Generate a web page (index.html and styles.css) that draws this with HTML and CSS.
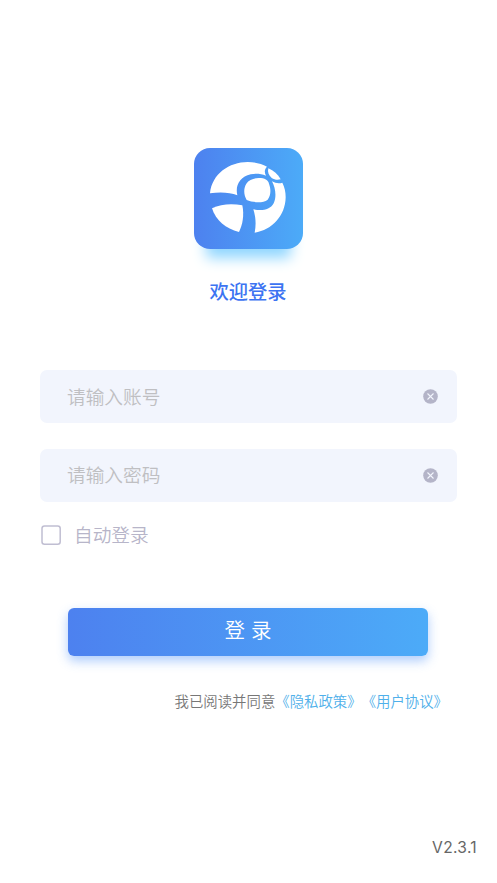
FILE: index.html
```html
<!DOCTYPE html>
<html lang="zh-CN">
<head>
<meta charset="utf-8">
<title>欢迎登录</title>
<link rel="stylesheet" href="styles.css">
</head>
<body>
<main class="page">
  <div class="logo">
    <svg class="logo-mark" viewBox="0 0 258 252" fill="#fff" aria-hidden="true">
      <path d="M15 115C21 56 73 21 128 21C149 21 169 26 186 35C179 42 177 51 183 62C168 56 151 55 137 58C105 65 90 91 97 121C75 112 45 111 15 115Z"/>
      <path d="M124 86C132 74 147 69 161 69C180 69 189 75 192 86C199 105 197 121 188 134C174 145 145 143 125 135C116 119 115 101 124 86Z"/>
      <path d="M190 40C187 51 191 61 200 69C208 74 217 76 227 73C219 58 206 47 190 40Z"/>
      <path d="M201 79C211 85 223 86 232 83C239 97 242 111 242 127C241 182 202 225 149 233C154 207 152 185 145 163C169 168 195 166 206 145C215 126 212 100 201 79Z"/>
      <path d="M21 160C48 147 80 145 112 151C118 181 113 209 102 231C62 221 33 197 21 160Z"/>
    </svg>
  </div>
  <h1 class="title">欢迎登录</h1>
  <form class="form">
    <div class="field">
      <input class="input" type="text" placeholder="请输入账号">
      <svg class="clear" viewBox="0 0 15 15" aria-hidden="true"><circle cx="7.5" cy="7.5" r="7.3"/><path d="M4.5 4.5l6 6M10.5 4.5l-6 6"/></svg>
    </div>
    <div class="field field-password">
      <input class="input" type="text" placeholder="请输入密码">
      <svg class="clear" viewBox="0 0 15 15" aria-hidden="true"><circle cx="7.5" cy="7.5" r="7.3"/><path d="M4.5 4.5l6 6M10.5 4.5l-6 6"/></svg>
    </div>
    <label class="auto"><svg class="box" viewBox="0 0 20 20" aria-hidden="true"><rect x="1" y="1" width="18.2" height="18.2" rx="2.5"/></svg><span class="auto-text">自动登录</span></label>
    <button class="submit" type="button">登 录</button>
  </form>
  <p class="terms">我已阅读并同意<span class="link">《隐私政策》</span><span class="link">《用户协议》</span></p>
  <footer class="version">V2.3.1</footer>
</main>
</body>
</html>
```
FILE: styles.css
```css
* { box-sizing: border-box; }

body {
  margin: 0;
  background: #fff;
  font-family: "Noto Sans CJK SC", sans-serif;
  font-weight: 350;
}

.page {
  display: flex;
  flex-direction: column;
  height: 883px;
  padding: 148px 40px 0;
}

.logo {
  align-self: center;
  flex: none;
  width: 109px;
  height: 101px;
  margin-right: 1px;
  padding: 7px 0 0 11px;
  border-radius: 16px;
  background: linear-gradient(90deg, #4d81ef, #4cabf8);
  box-shadow: 0 21px 14px -12px #8fd6ff;
}

.logo-mark {
  display: block;
  width: 86px;
  height: 84px;
}

.title {
  margin: 28px 1px 0 0;
  color: #3d74f2;
  font-size: 19.3px;
  font-weight: 500;
  line-height: 28px;
  text-align: center;
}

.form {
  display: flex;
  flex-direction: column;
  margin-top: 65px;
}

.field {
  display: flex;
  align-items: center;
  height: 53px;
  padding: 0 19px 0 27px;
  border-radius: 7px;
  background: #f2f5fd;
}

.field-password { margin-top: 26px; }

.input {
  flex: 1;
  min-width: 0;
  height: 30px;
  margin-bottom: 3px;
  padding: 0;
  border: 0;
  outline: 0;
  background: transparent;
  font: inherit;
  font-size: 18.7px;
}

.input::placeholder { color: #bfbfc2; }

.field-password .input { margin-bottom: 5px; }

.clear {
  width: 15px;
  height: 15px;
  fill: #b4b4c8;
}

.clear path {
  stroke: #f2f5fd;
  stroke-width: 1.1;
}

.auto {
  display: flex;
  align-items: center;
  gap: 13px;
  height: 28px;
  margin-top: 19px;
  padding-left: 1px;
  color: #b7b5c9;
  font-size: 18.7px;
}

.auto-text { padding-bottom: 3px; }

.box {
  width: 20px;
  height: 20px;
  fill: none;
  stroke: #c0bed2;
  stroke-width: 1.5;
}

.submit {
  height: 48px;
  margin: 59px 29px 0 28px;
  padding: 0 0 7px;
  border: 0;
  border-radius: 6px;
  background: linear-gradient(90deg, #4d81ef, #4cabf8);
  box-shadow: 0 5px 11px rgba(77, 145, 248, .45);
  color: #fff;
  font: inherit;
  font-size: 20.5px;
  word-spacing: 1.5px;
}

.terms {
  margin: 34px 9px 0 0;
  color: #777;
  font-size: 14.4px;
  line-height: 22px;
  text-align: right;
  text-spacing-trim: space-all;
  white-space: nowrap;
}

.link { color: #4fb0ea; }

.version {
  margin: auto -20px 23px 0;
  color: #666;
  font-family: Inter, sans-serif;
  font-size: 15.6px;
  font-weight: 400;
  letter-spacing: .3px;
  line-height: 24px;
  text-align: right;
}
```
